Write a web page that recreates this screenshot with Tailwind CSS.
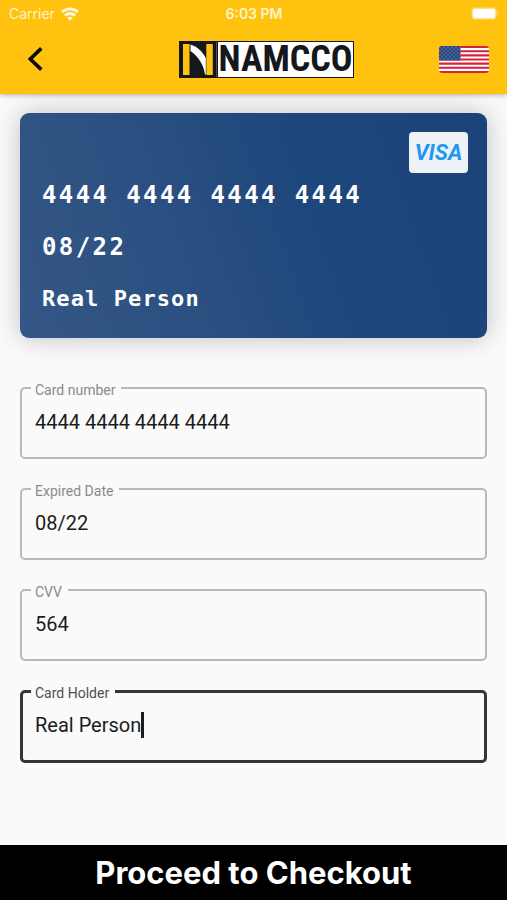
<!DOCTYPE html>
<html lang="en">
<head>
<meta charset="utf-8">
<meta name="viewport" content="width=device-width, initial-scale=1">
<title>Payment card</title>
<script src="https://cdn.jsdelivr.net/npm/@tailwindcss/browser@4"></script>
</head>
<body class="flex min-h-screen flex-col bg-[#fafafa] font-['Roboto',sans-serif] text-[#1c1c1c]">

<header class="relative z-10 bg-[#ffc20f] pb-1 shadow-[0_1px_5px_rgba(0,0,0,0.3)]">
  <div class="grid h-7 grid-cols-3 items-center pr-2 pl-[9px] font-['Inter',sans-serif] text-sm text-[#fff3cc]">
    <div class="flex items-center gap-1.5">
      <span>Carrier</span>
      <svg class="h-[14px] w-[18px]" viewBox="0 0 18 14" fill="none" stroke="#fff8e0" stroke-width="2.8" aria-hidden="true">
        <path d="M1 5C5.6.7 12.4.7 17 5"/>
        <path d="M3.900 8.500c2.900-2.700 7.300-2.700 10.200 0"/>
        <path d="M9 13.800 6 10.800c1.600-1.500 4.400-1.500 6 0z" fill="#fff8e0" stroke="none"/>
      </svg>
    </div>
    <span class="text-center font-semibold">6:03 PM</span>
    <svg class="h-3.5 w-7 justify-self-end" viewBox="0 0 28 14" aria-hidden="true">
      <rect x=".5" y=".5" width="25" height="12" rx="3.5" fill="#ffdf80"/>
      <rect x="2" y="2" width="22" height="9" rx="2" fill="#fff"/>
      <path d="M26.3 4.5c1.6.6 1.6 3.4 0 4z" fill="#ffdf80"/>
    </svg>
  </div>
  <div class="grid h-[62px] grid-cols-[1fr_auto_1fr] items-center pr-[18px] pl-5">
    <button type="button" aria-label="Back" class="flex size-8 items-center justify-center">
      <svg class="size-8" viewBox="0 0 32 32" fill="none" stroke="#0b0b0b" stroke-width="3.6" aria-hidden="true"><path d="M21.3 5.4 10.3 16l11 10.6"/></svg>
    </button>
    <div class="ml-6 flex h-[37px] w-[175px] border border-[#16181b] bg-white">
      <svg class="h-full w-[38px] shrink-0" viewBox="0 0 38 35" aria-hidden="true">
        <rect width="38" height="35" fill="#14171b"/>
        <rect x="3" y="2" width="6.500" height="31" fill="#ffc20f"/>
        <rect x="26.300" y="2" width="6.500" height="31" fill="#ffc20f"/>
        <path d="M10.500 2.500C17 4.500 23 10 25.800 16v16.500h-.8C24 23.500 18.500 14.500 10.500 9z" fill="#fff"/>
        <path d="M36.500 0v35" stroke="#777" stroke-width=".6"/>
      </svg>
      <span class="flex flex-1 justify-center font-['Roboto_Condensed','Roboto',sans-serif] text-4xl/[35px] font-bold text-[#14171b]">NAMCCO</span>
    </div>
    <button type="button" aria-label="Language: English (US)" class="justify-self-end">
      <svg class="h-[27px] w-[50px]" viewBox="0 0 50 27" aria-hidden="true">
        <defs>
          <clipPath id="flag"><rect width="50" height="27" rx="3"/></clipPath>
          <pattern id="stars" width="4" height="4" patternUnits="userSpaceOnUse"><circle cx="1" cy="1" r=".6" fill="#a9b6d0"/><circle cx="3" cy="3" r=".6" fill="#a9b6d0"/></pattern>
        </defs>
        <g clip-path="url(#flag)">
          <rect width="50" height="27" fill="#fff"/>
          <path d="M0 1.040h50M0 5.190h50M0 9.350h50M0 13.500h50M0 17.650h50M0 21.800h50M0 25.960h50" stroke="#d8203a" stroke-width="2.080"/>
          <rect width="21.500" height="14.500" fill="#2c4680"/>
          <rect width="21.500" height="14.500" fill="url(#stars)"/>
        </g>
      </svg>
    </button>
  </div>
</header>

<main class="flex-1 px-5 pt-[19px] pb-8">
  <section aria-label="Card preview" class="flex flex-col rounded-[9px] bg-linear-[70deg,#345787_0%,#2b4f80_35%,#1e477c_62%,#1b437a_100%] pt-[19px] pr-[19px] pb-[23px] pl-[22px] font-['DejaVu_Sans_Mono',monospace] font-bold text-white shadow-[0_0_26px_rgba(0,0,0,0.24)]">
    <div class="flex h-[41px] w-[59px] items-center justify-center self-end rounded bg-[#eff2f5] font-['Roboto',sans-serif] text-[22px] leading-none font-bold text-[#2196f3] italic">VISA</div>
    <div class="mt-1.5 flex flex-col gap-5">
      <p class="text-2xl/8 tracking-widest whitespace-nowrap">4444 4444 4444 4444</p>
      <p class="text-2xl/8 tracking-widest">08/22</p>
      <p class="text-[22px]/8 tracking-wider">Real Person</p>
    </div>
  </section>

  <form id="card-form" class="mt-10 flex flex-col gap-5">
    <fieldset class="rounded-[5px] border-2 border-[#b8b8b8] pb-[21px] pl-[9px]">
      <legend class="h-5 pt-0.5 pr-1.5 pl-1 text-sm/5 text-[#8a8a8a]"><label for="number">Card number</label></legend>
      <input id="number" type="text" inputmode="numeric" value="4444 4444 4444 4444" class="mt-2.5 block h-7 w-full bg-transparent px-1 text-xl/7 outline-none">
    </fieldset>
    <fieldset class="rounded-[5px] border-2 border-[#b8b8b8] pb-[21px] pl-[9px]">
      <legend class="h-5 pt-0.5 pr-1.5 pl-1 text-sm/5 text-[#8a8a8a]"><label for="expiry">Expired Date</label></legend>
      <input id="expiry" type="text" inputmode="numeric" value="08/22" class="mt-2.5 block h-7 w-full bg-transparent px-1 text-xl/7 outline-none">
    </fieldset>
    <fieldset class="rounded-[5px] border-2 border-[#b8b8b8] pb-[21px] pl-[9px]">
      <legend class="h-5 pt-0.5 pr-1.5 pl-1 text-sm/5 text-[#8a8a8a]"><label for="cvv">CVV</label></legend>
      <input id="cvv" type="text" inputmode="numeric" value="564" class="mt-2.5 block h-7 w-full bg-transparent px-1 text-xl/7 outline-none">
    </fieldset>
    <fieldset class="rounded-[5px] border-3 border-[#353535] pb-[21px] pl-2">
      <legend class="h-5 pt-0.5 pr-1.5 pl-1 text-sm/5 text-[#505050]"><label for="holder">Card Holder</label></legend>
      <div class="mt-2.5 flex h-7 items-center">
        <input id="holder" type="text" value="Real Person" class="field-sizing-content h-7 bg-transparent pl-1 text-xl/7 caret-transparent outline-none">
        <span class="h-[26px] w-[3px] bg-[#1c1c1c]" aria-hidden="true"></span>
      </div>
    </fieldset>
  </form>
</main>

<button type="submit" form="card-form" class="h-[55px] w-full bg-black font-['Inter',sans-serif] text-[31px] leading-none font-bold text-white">Proceed to Checkout</button>

</body>
</html>
